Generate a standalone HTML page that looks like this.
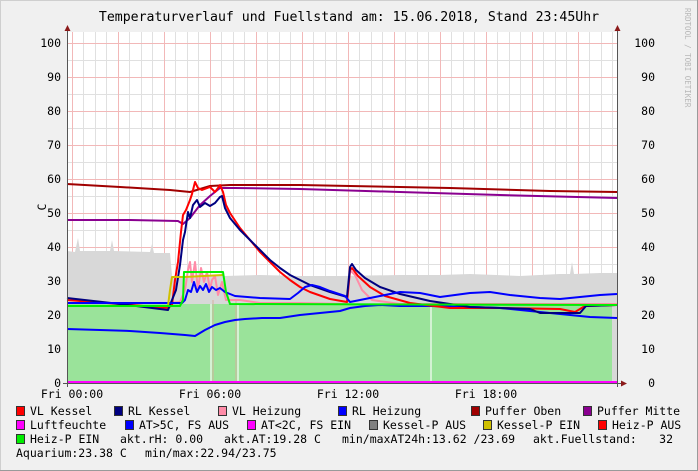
<!DOCTYPE html>
<html><head><meta charset="utf-8"><style>
html,body{margin:0;padding:0;background:#f0f0f0}
svg{display:block}
text{font-family:"DejaVu Sans Mono","Liberation Mono",monospace;fill:#000}
</style></head><body>
<svg width="698" height="471" viewBox="0 0 698 471" xmlns="http://www.w3.org/2000/svg">
<rect x="0" y="0" width="698" height="471" fill="#f0f0f0"/>
<rect x="0.5" y="0.5" width="697" height="470" fill="none" stroke="#cfcfcf"/>
<line x1="697.5" y1="0" x2="697.5" y2="471" stroke="#9a9a9a"/>
<line x1="0" y1="470.5" x2="698" y2="470.5" stroke="#9a9a9a"/>
<text x="349" y="21" font-size="13.2" text-anchor="middle">Temperaturverlauf und Fuellstand am: 15.06.2018, Stand 23:45Uhr</text>
<text transform="translate(685,8) rotate(90)" font-size="7.5" style="fill:#b8b8b8">RRDTOOL / TOBI OETIKER</text>
<rect x="67" y="32" width="550" height="351" fill="#fff"/>
<g stroke="#e0e0e0" stroke-width="1">
<path d="M67 366.5H617M67 332.5H617M67 298.5H617M67 264.5H617M67 230.5H617M67 196.5H617M67 162.5H617M67 128.5H617M67 94.5H617M67 60.5H617"/>
<path d="M83.5 32V383M95.5 32V383M106.5 32V383M129.5 32V383M141.5 32V383M152.5 32V383M175.5 32V383M187.5 32V383M198.5 32V383M221.5 32V383M233.5 32V383M244.5 32V383M267.5 32V383M279.5 32V383M290.5 32V383M313.5 32V383M325.5 32V383M336.5 32V383M359.5 32V383M371.5 32V383M382.5 32V383M405.5 32V383M417.5 32V383M428.5 32V383M451.5 32V383M463.5 32V383M474.5 32V383M497.5 32V383M509.5 32V383M520.5 32V383M543.5 32V383M555.5 32V383M566.5 32V383M589.5 32V383M601.5 32V383M612.5 32V383"/>
</g>
<g stroke="#f2b8b8" stroke-width="1">
<path d="M67 349.5H617M67 315.5H617M67 281.5H617M67 247.5H617M67 213.5H617M67 179.5H617M67 145.5H617M67 111.5H617M67 77.5H617M67 43.5H617"/>
<path d="M72.5 32V383M118.5 32V383M164.5 32V383M210.5 32V383M256.5 32V383M302.5 32V383M348.5 32V383M394.5 32V383M440.5 32V383M486.5 32V383M532.5 32V383M578.5 32V383"/>
</g>
<path d="M67 383V251L75 252L78 238L80 251L110 251L112 240L114 251L150 252L152 244L154 253L170 253L172 276L225 276L260 275L300 276L340 276L400 275L440 275L470 274L520 276L560 274L570 274L572 262L574 274L600 273L616 273V383Z" fill="#d8d8d8"/>
<path d="M67 383V304H612V383Z" fill="#9ae39a"/>
<g stroke="#e7f7e7" stroke-width="1.5"><path d="M211 304V383M238 304V383M431 304V383"/></g>
<g stroke="#d7b0a0" stroke-width="1"><path d="M213 300V383M236 300V383"/></g>
<rect x="612" y="273" width="5" height="110" fill="#d8d8d8"/>
<g fill="none" stroke-width="2" stroke-linejoin="round">
<polyline stroke="#0000ff" points="67,329 100,330 130,331 160,333 185,335 195,336 205,330 215,325 225,322 235,320 245,319 262,318 280,318 300,315 320,313 340,311 350,308 365,306 380,305 400,306 430,306 470,307 500,308 530,311 560,314 590,317 617,318"/>
<polyline stroke="#ff8ca8" points="67,303 170,303 180,302 185,290 188,270 190,262 192,282 195,262 198,290 201,268 204,282 207,272 210,290 212,280 215,276 218,295 222,282 226,300 240,300 260,303 300,303 347,304 350,270 355,275 362,290 372,300 400,304 617,304"/>
<polyline stroke="#a00000" points="67,184 120,187 170,190 190,192 200,189 210,186 230,185 300,185 350,186 450,188 550,191 617,192"/>
<polyline stroke="#8a0090" points="67,220 130,220 178,221 183,224 190,218 200,205 210,196 220,188 235,188 300,189 400,192 500,195 617,198"/>
<polyline stroke="#ff0000" points="67,300 120,304 168,308 172,305 175,280 178,262 181,232 183,215 186,210 188,205 190,200 192,194 195,182 198,188 202,190 210,187 215,192 218,188 220,185 223,192 226,205 230,213 240,228 250,240 260,252 270,262 280,272 290,280 300,287 310,292 330,299 347,302 350,270 352,268 358,276 370,287 385,296 410,303 450,308 500,308 560,309 575,312 585,306 617,305"/>
<polyline stroke="#000080" points="67,298 120,304 168,310 172,300 176,290 180,265 183,240 185,232 188,212 190,218 193,205 197,200 200,207 205,203 210,206 215,203 220,197 222,196 225,208 230,218 240,230 250,240 260,250 270,260 280,268 290,275 300,280 310,285 330,292 347,297 350,267 352,264 356,270 365,278 380,287 400,294 430,301 470,307 530,309 540,313 580,313 586,306 617,305"/>
<polyline stroke="#0000ff" points="67,303 175,303 182,303 185,300 188,290 191,292 194,282 197,292 200,286 203,290 206,284 209,292 212,287 216,290 220,288 225,292 235,296 260,298 290,299 298,293 305,287 312,285 320,287 330,291 345,296 350,302 365,299 380,296 400,292 420,293 440,297 470,293 490,292 510,295 540,298 560,299 580,297 600,295 617,294"/>
<polyline stroke="#d0c000" points="67,306 168,306 170,290 172,277 184,277 223,275"/>
<polyline stroke="#00ee00" points="67,306 180,306 183,300 184,272 223,272 226,292 230,304 617,305"/>
<line x1="67" y1="382" x2="617" y2="382" stroke="#ff00ff"/>
</g>
<line x1="67.5" y1="26" x2="67.5" y2="387" stroke="#555"/>
<line x1="617.5" y1="26" x2="617.5" y2="387" stroke="#555"/>
<line x1="63" y1="383.5" x2="622" y2="383.5" stroke="#555"/>
<path d="M64.5 31L67.5 25L70.5 31Z M614.5 31L617.5 25L620.5 31Z M621 380.5L627 383.5L621 386.5Z" fill="#8b1a1a"/>
<g font-size="11.5">
<g text-anchor="end">
<text x="61" y="387">0</text><text x="61" y="353">10</text><text x="61" y="319">20</text><text x="61" y="285">30</text><text x="61" y="251">40</text><text x="61" y="217">50</text><text x="61" y="183">60</text><text x="61" y="149">70</text><text x="61" y="115">80</text><text x="61" y="81">90</text><text x="61" y="47">100</text>
<text x="655" y="387">0</text><text x="655" y="353">10</text><text x="655" y="319">20</text><text x="655" y="285">30</text><text x="655" y="251">40</text><text x="655" y="217">50</text><text x="655" y="183">60</text><text x="655" y="149">70</text><text x="655" y="115">80</text><text x="655" y="81">90</text><text x="655" y="47">100</text>
</g>
<text transform="translate(46,207) rotate(-90)" text-anchor="middle">C</text>
<g text-anchor="middle">
<text x="72" y="398">Fri 00:00</text><text x="210" y="398">Fri 06:00</text><text x="348" y="398">Fri 12:00</text><text x="486" y="398">Fri 18:00</text>
</g>
</g>
<g stroke="#333" stroke-width="1">
<rect x="16.5" y="406.5" width="8" height="9" fill="#ff0000"/>
<rect x="114.5" y="406.5" width="8" height="9" fill="#000080"/>
<rect x="218.5" y="406.5" width="8" height="9" fill="#ff8ca8"/>
<rect x="338.5" y="406.5" width="8" height="9" fill="#0000ff"/>
<rect x="471.5" y="406.5" width="8" height="9" fill="#a00000"/>
<rect x="583.5" y="406.5" width="8" height="9" fill="#8a0090"/>
<rect x="16.5" y="420.5" width="8" height="9" fill="#ff00ff"/>
<rect x="125.5" y="420.5" width="8" height="9" fill="#0000ff"/>
<rect x="247.5" y="420.5" width="8" height="9" fill="#ff00ff"/>
<rect x="369.5" y="420.5" width="8" height="9" fill="#808080"/>
<rect x="483.5" y="420.5" width="8" height="9" fill="#d0c000"/>
<rect x="598.5" y="420.5" width="8" height="9" fill="#ff0000"/>
<rect x="16.5" y="434.5" width="8" height="9" fill="#00ee00"/>
</g>
<g font-size="11.5">
<text x="30" y="415">VL Kessel</text><text x="128" y="415">RL Kessel</text><text x="232" y="415">VL Heizung</text><text x="352" y="415">RL Heizung</text><text x="485" y="415">Puffer Oben</text><text x="597" y="415">Puffer Mitte</text>
<text x="30" y="429">Luftfeuchte</text><text x="139" y="429">AT&gt;5C, FS AUS</text><text x="261" y="429">AT&lt;2C, FS EIN</text><text x="383" y="429">Kessel-P AUS</text><text x="497" y="429">Kessel-P EIN</text><text x="612" y="429">Heiz-P AUS</text>
<text x="30" y="443">Heiz-P EIN</text><text x="120" y="443">akt.rH: 0.00</text><text x="224" y="443">akt.AT:19.28 C</text><text x="342" y="443">min/maxAT24h:13.62 /23.69</text><text x="533" y="443">akt.Fuellstand:</text><text x="673" y="443" text-anchor="end">32</text>
<text x="16" y="457">Aquarium:23.38 C</text><text x="145" y="457">min/max:22.94/23.75</text>
</g>
</svg>
</body></html>
